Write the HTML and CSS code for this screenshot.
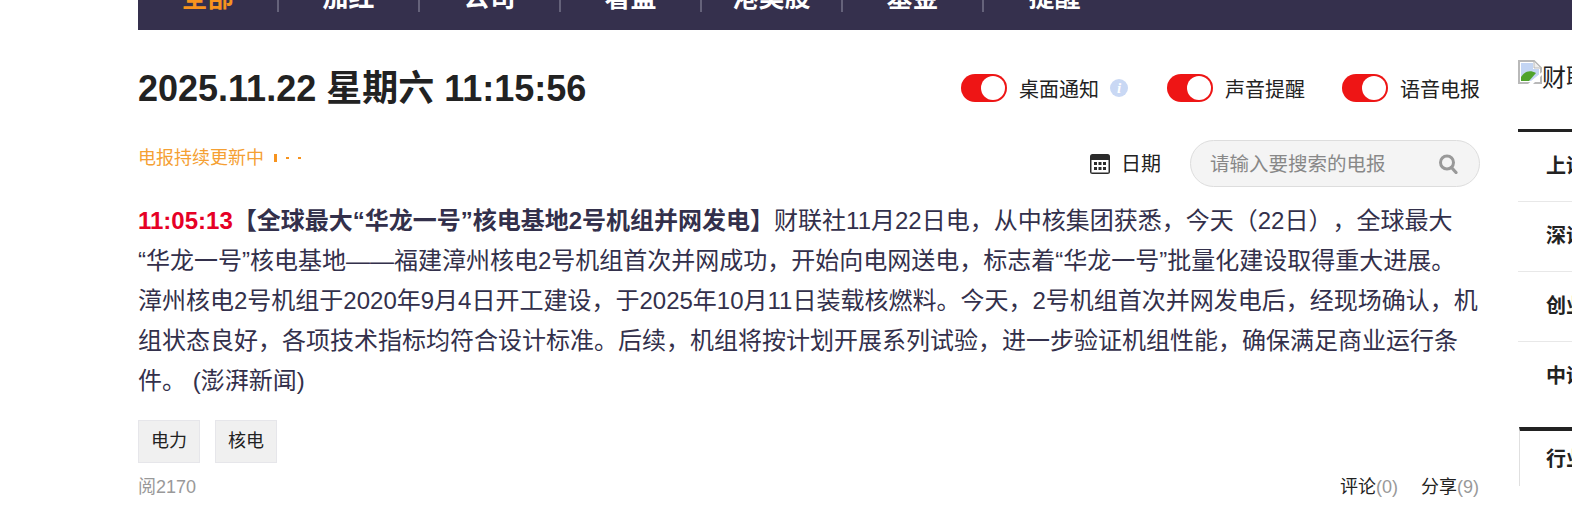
FILE: index.html
```html
<!DOCTYPE html>
<html lang="zh-CN">
<head>
    <meta charset="UTF-8">
    <title>电报</title>
    <link rel="stylesheet" href="styles.css">
</head>
<body>
    <!-- Top navigation, scrolled partly out of view -->
    <nav class="nav">
        <a class="nav-item active" href="#">全部</a>
        <a class="nav-item" href="#">加红</a>
        <a class="nav-item" href="#">公司</a>
        <a class="nav-item" href="#">看盘</a>
        <a class="nav-item" href="#">港美股</a>
        <a class="nav-item" href="#">基金</a>
        <a class="nav-item" href="#">提醒</a>
    </nav>

    <div class="page">
        <main class="main">
            <div class="head-row">
                <h1 class="clock">2025.11.22 星期六 11:15:56</h1>
                <div class="switches">
                    <div class="switch-item">
                        <span class="toggle"></span>
                        <span>桌面通知</span>
                        <span class="info">i</span>
                    </div>
                    <div class="switch-item">
                        <span class="toggle"></span>
                        <span>声音提醒</span>
                    </div>
                    <div class="switch-item">
                        <span class="toggle"></span>
                        <span>语音电报</span>
                    </div>
                </div>
            </div>

            <div class="tool-row">
                <div class="status">
                    电报持续更新中
                    <span class="dots"><i></i><i></i><i></i></span>
                </div>
                <div class="date-pick">
                    <svg class="calendar" width="20" height="20" viewBox="0 0 20 20">
                        <rect x="0" y="0" width="20" height="20" rx="2.5" fill="#2b2b2b"/>
                        <rect x="1.5" y="6" width="17" height="12.5" fill="#fff"/>
                        <g fill="#2b2b2b">
                            <rect x="4" y="8" width="3" height="3"/>
                            <rect x="8.5" y="8" width="3" height="3"/>
                            <rect x="13" y="8" width="3" height="3"/>
                            <rect x="4" y="13" width="3" height="3"/>
                            <rect x="8.5" y="13" width="3" height="3"/>
                            <rect x="13" y="13" width="3" height="3"/>
                        </g>
                    </svg>
                    <span>日期</span>
                </div>
                <div class="search">
                    <span class="search-text">请输入要搜索的电报</span>
                    <svg width="20" height="20" viewBox="0 0 20 20" fill="none" stroke="#999">
                        <circle cx="9" cy="8.5" r="6.5" stroke-width="3"/>
                        <path d="M13.5 13.5L18 18.5" stroke-width="3.2" stroke-linecap="round"/>
                    </svg>
                </div>
            </div>

            <p class="telegram"><span class="time">11:05:13</span><strong>【全球最大“华龙一号”核电基地2号机组并网发电】</strong>财联社11月22日电，从中核集团获悉，今天（22日），全球最大“华龙一号”核电基地——福建漳州核电2号机组首次并网成功，开始向电网送电，标志着“华龙一号”批量化建设取得重大进展。<br>漳州核电2号机组于2020年9月4日开工建设，于2025年10月11日装载核燃料。今天，2号机组首次并网发电后，经现场确认，机组状态良好，各项技术指标均符合设计标准。后续，机组将按计划开展系列试验，进一步验证机组性能，确保满足商业运行条件。 (澎湃新闻)</p>

            <div class="tags">
                <span class="tag">电力</span>
                <span class="tag">核电</span>
            </div>

            <div class="foot-row">
                <span class="muted">阅2170</span>
                <div class="actions">
                    <span>评论<span class="muted">(0)</span></span>
                    <span>分享<span class="muted">(9)</span></span>
                </div>
            </div>
        </main>

        <aside class="side">
            <div class="logo">
                <svg class="broken" width="24" height="24" viewBox="0 0 24 24">
                    <path d="M1 1H16L23 8V23H1Z" fill="#fff" stroke="#b9b9b9" stroke-width="2"/>
                    <path d="M3 3H15V9H21V15L13 21H3Z" fill="#c3d5f3"/>
                    <path d="M16 1V8H23Z" fill="#eee" stroke="#b9b9b9"/>
                    <path d="M3 21V17C7 11 12 10 18 13L11 21Z" fill="#4fa32c"/>
                    <path d="M10 24L24 12V15L15 24Z" fill="#fff"/>
                </svg>财联社
            </div>
            <ul class="index-list">
                <li>上证指数</li>
                <li>深证成指</li>
                <li>创业板指</li>
                <li>中证500</li>
            </ul>
            <div class="industry">行业板块</div>
        </aside>
    </div>
</body>
</html>
```

FILE: styles.css
```css
/* Body Styling */
body {
    margin: 0;
    height: 510px;
    overflow: hidden;
    background-color: #fff;
    color: #222;
    font-family: "Liberation Sans", "Noto Sans CJK SC", sans-serif;
    text-spacing-trim: space-all;
}

/* Navigation */
.nav {
    display: flex;
    height: 60px;
    margin: -30px 0 0 138px;
    background-color: #35304d;
}

.nav-item {
    box-sizing: border-box;
    width: 141px;
    height: 42px;
    border-right: 2px solid #65627a;
    overflow: hidden;
    color: #fff;
    font-size: 26px;
    font-weight: bold;
    line-height: 56px;
    text-align: center;
    text-decoration: none;
}

.nav-item:last-child {
    border-right: none;
}

.nav-item.active {
    color: #f7931e;
}

/* Page Columns */
.page {
    display: flex;
    gap: 38px;
    padding-left: 138px;
}

.main {
    flex: none;
    width: 1342px;
}

.side {
    flex: none;
    width: 300px;
}

/* Clock and Switches */
.head-row {
    display: flex;
    justify-content: space-between;
    align-items: center;
    height: 56px;
    margin-top: 30px;
}

.clock {
    margin: 0 0 6px;
    font-size: 36px;
    font-weight: bold;
    color: #222;
}

.switches {
    display: flex;
    gap: 37px;
    font-size: 20px;
}

.switch-item {
    display: flex;
    align-items: center;
    gap: 12px;
}

.toggle {
    position: relative;
    width: 46px;
    height: 28px;
    border-radius: 14px;
    background-color: #ee1515;
}

.toggle::after {
    content: "";
    position: absolute;
    top: 2px;
    right: 2px;
    width: 24px;
    height: 24px;
    border-radius: 50%;
    background-color: #fff;
}

.info {
    width: 18px;
    height: 18px;
    margin: 0 2px 0 -1px;
    border-radius: 50%;
    background-color: #c9d8f4;
    color: #fff;
    font-family: "Liberation Serif", serif;
    font-size: 15px;
    font-style: italic;
    font-weight: bold;
    line-height: 18px;
    text-align: center;
}

/* Status, Date and Search */
.tool-row {
    display: flex;
    align-items: center;
    height: 47px;
    margin-top: 24px;
}

.status {
    align-self: flex-start;
    display: flex;
    align-items: center;
    gap: 10px;
    margin-top: 1px;
    margin-right: auto;
    color: #f5a033;
    font-size: 18px;
    line-height: 34px;
}

.dots {
    display: flex;
    align-items: center;
    gap: 9px;
}

.dots i {
    width: 3px;
    height: 2px;
    background-color: #f7931e;
}

.dots i:first-child {
    height: 8px;
}

.date-pick {
    display: flex;
    align-items: center;
    gap: 11px;
    margin-right: 29px;
    font-size: 20px;
}

.date-pick span {
    position: relative;
    top: -1px;
}

.calendar {
    display: block;
}

.search {
    box-sizing: border-box;
    display: flex;
    justify-content: space-between;
    align-items: center;
    width: 290px;
    height: 47px;
    padding: 0 21px 0 19px;
    border: 1px solid #ddd;
    border-radius: 24px;
    background-color: #f4f4f4;
    color: #888;
    font-size: 19.5px;
}

.search-text {
    position: relative;
    top: -1px;
}

/* Telegram Text */
.telegram {
    margin: 14px 0 0;
    color: #33304b;
    font-size: 24px;
    line-height: 40px;
}

.telegram strong {
    font-weight: bold;
}

.time {
    color: #e60026;
    font-weight: bold;
}

/* Tags */
.tags {
    display: flex;
    gap: 15px;
    margin-top: 19px;
}

.tag {
    box-sizing: border-box;
    width: 62px;
    height: 43px;
    border: 1px solid #e6e6ea;
    background-color: #f0f0f0;
    font-size: 18px;
    line-height: 41px;
    text-align: center;
}

/* Footer Row */
.foot-row {
    display: flex;
    justify-content: space-between;
    margin-top: 13px;
    font-size: 18px;
    line-height: 22px;
}

.actions {
    display: flex;
    gap: 23px;
    padding-right: 1px;
}

.muted {
    color: #999;
}

/* Sidebar */
.logo {
    height: 69px;
    margin-top: 30px;
    font-size: 24px;
    line-height: 36px;
    white-space: nowrap;
}

.broken {
    vertical-align: 2px;
}

.index-list {
    margin: 0;
    padding: 0;
    border-top: 3px solid #222;
    list-style: none;
}

.index-list li {
    box-sizing: border-box;
    height: 70px;
    padding-left: 28px;
    border-bottom: 1px solid #e8e8e8;
    font-size: 20px;
    font-weight: bold;
    line-height: 68px;
}

.index-list li:last-child {
    height: 85px;
    border-bottom: none;
}

.industry {
    box-sizing: border-box;
    height: 59px;
    margin-left: 1px;
    padding-left: 26px;
    border-top: 4px solid #222;
    border-left: 1px solid #e0e0e0;
    font-size: 20px;
    font-weight: bold;
    line-height: 56px;
}
```
